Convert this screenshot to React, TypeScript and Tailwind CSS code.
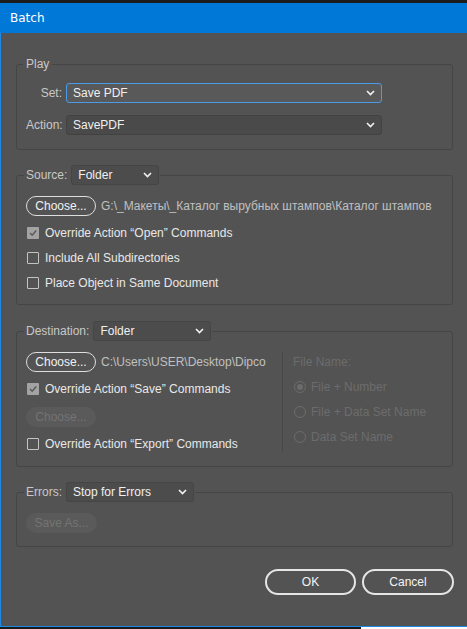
import React from 'react';

const Chevron = () => (
  <svg width="9" height="6" viewBox="0 0 9 6" className="shrink-0">
    <polyline points="1,1 4.5,4.5 8,1" fill="none" stroke="#f2f2f2" strokeWidth="1.6" />
  </svg>
);

const Select: React.FC<{ value: string; width: string; focused?: boolean; dark?: boolean }> = ({ value, width, focused, dark }) => (
  <div
    className={`${width} h-[20px] flex items-center justify-between pl-[6px] pr-[6px] rounded-[3px] border text-[12px] text-[#f0f0f0] ${
      focused ? 'border-[#4b9be6] bg-[#595959]' : dark ? 'border-[#424242] bg-[#4a4a4a]' : 'border-[#454545] bg-[#4c4c4c]'
    }`}
  >
    <span className="whitespace-nowrap">{value}</span>
    <Chevron />
  </div>
);

const Checkbox: React.FC<{ checked?: boolean; label: string }> = ({ checked, label }) => (
  <div className="h-[20px] flex items-center gap-[6px] pl-[1px]">
    {checked ? (
      <span className="w-[12px] h-[12px] bg-[#a3a3a3] rounded-[1px] flex items-center justify-center">
        <svg width="10" height="10" viewBox="0 0 10 10">
          <polyline points="2,5 4.2,7.2 8.2,2.6" fill="none" stroke="#5b5b5b" strokeWidth="1.6" />
        </svg>
      </span>
    ) : (
      <span className="w-[12px] h-[12px] border border-[#c4c4c4] rounded-[1px]" />
    )}
    <span className="text-[#e8e8e8] whitespace-nowrap">{label}</span>
  </div>
);

const Radio: React.FC<{ checked?: boolean; label: string }> = ({ checked, label }) => (
  <div className="h-[20px] flex items-center gap-[5px] pl-[1px]">
    <span className="w-[12px] h-[12px] rounded-full border border-[#6c6c6c] flex items-center justify-center">
      {checked && <span className="w-[6px] h-[6px] rounded-full bg-[#6c6c6c]" />}
    </span>
    <span className="text-[#6c6c6c] whitespace-nowrap">{label}</span>
  </div>
);

const ChooseButton = () => (
  <button className="w-[70px] h-[20px] rounded-full border border-[#dedede] text-[12px] text-[#f2f2f2] flex items-center justify-center">
    Choose...
  </button>
);

const DisabledButton: React.FC<{ label: string; width: string }> = ({ label, width }) => (
  <div className={`${width} h-[20px] rounded-full bg-[#5a5a5a] text-[12px] text-[#747474] flex items-center justify-center`}>
    {label}
  </div>
);

const groupCls = 'w-[437px] ml-[15px] border border-[#454545] rounded-[3px] pl-[9px] pr-[9px]';

export default function App() {
  return (
    <div className="w-[467px] h-[629px] bg-[#1c1c1c] flex flex-col font-['Liberation_Sans',Arial,sans-serif] text-[12px] overflow-hidden">
      <div className="h-[3px] bg-[#1c1c1c]" />
      <div className="h-[30px] bg-[#0078d7] flex items-center pl-[10px] text-white text-[12px] font-['DejaVu_Sans',sans-serif]">
        Batch
      </div>

      <div className="h-[594px] bg-[#535353] border-l border-b border-[#1e88e5] flex flex-col">
        {/* Play */}
        <fieldset className={`${groupCls} mt-[24px] pt-[12px] pb-[14px]`}>
          <legend className="-ml-[3px] px-[3px] leading-[14px] text-[#c8c8c8]">Play</legend>
          <div className="flex flex-col gap-[12px]">
            <div className="flex items-center gap-[4px]">
              <span className="w-[36px] text-right text-[#c8c8c8]">Set:</span>
              <Select value="Save PDF" width="w-[316px]" focused />
            </div>
            <div className="flex items-center gap-[4px]">
              <span className="w-[36px] text-right text-[#c8c8c8]">Action:</span>
              <Select value="SavePDF" width="w-[316px]" dark />
            </div>
          </div>
        </fieldset>

        {/* Source */}
        <fieldset className={`${groupCls} mt-[15px] pt-[11px] pb-[11px]`}>
          <legend className="-ml-[2px] pl-[2px] pr-[1px]">
            <div className="flex items-center gap-[4px]">
              <span className="text-[#c8c8c8]">Source:</span>
              <Select value="Folder" width="w-[88px]" />
            </div>
          </legend>
          <div className="flex items-center gap-[5px]">
            <ChooseButton />
            <span className="text-[#c0c0c0] whitespace-nowrap">G:\_Макеты\_Каталог вырубных штампов\Каталог штампов</span>
          </div>
          <div className="mt-[7px] flex flex-col gap-[5px]">
            <Checkbox checked label="Override Action “Open” Commands" />
            <Checkbox label="Include All Subdirectories" />
            <Checkbox label="Place Object in Same Document" />
          </div>
        </fieldset>

        {/* Destination */}
        <fieldset className={`${groupCls} mt-[16px] pt-[11px] pb-[12px]`}>
          <legend className="-ml-[2px] pl-[2px] pr-[1px]">
            <div className="flex items-center gap-[4px]">
              <span className="text-[#c8c8c8]">Destination:</span>
              <Select value="Folder" width="w-[118px]" />
            </div>
          </legend>
          <div className="flex">
            <div className="w-[256px] flex flex-col">
              <div className="flex items-center gap-[5px]">
                <ChooseButton />
                <span className="text-[#c0c0c0] whitespace-nowrap">C:\Users\USER\Desktop\Dipco</span>
              </div>
              <div className="mt-[7px]">
                <Checkbox checked label="Override Action “Save” Commands" />
              </div>
              <div className="mt-[8px]">
                <DisabledButton label="Choose..." width="w-[70px]" />
              </div>
              <div className="mt-[7px]">
                <Checkbox label="Override Action “Export” Commands" />
              </div>
            </div>
            <div className="h-[100px] border-l border-[#474747] pl-[10px] flex flex-col gap-[5px]">
              <div className="h-[20px] flex items-center text-[#6c6c6c]">File Name:</div>
              <Radio checked label="File + Number" />
              <Radio label="File + Data Set Name" />
              <Radio label="Data Set Name" />
            </div>
          </div>
        </fieldset>

        {/* Errors */}
        <fieldset className={`${groupCls} mt-[15px] pt-[11px] pb-[13px]`}>
          <legend className="-ml-[2px] pl-[2px] pr-[1px]">
            <div className="flex items-center gap-[4px]">
              <span className="text-[#c8c8c8]">Errors:</span>
              <Select value="Stop for Errors" width="w-[128px]" />
            </div>
          </legend>
          <DisabledButton label="Save As..." width="w-[71px]" />
        </fieldset>

        <div className="mt-[22px] flex justify-end gap-[6px] pr-[13px]">
          <button className="w-[91px] h-[26px] rounded-full border-2 border-[#e6e6e6] text-[#f4f4f4] text-[12px]">OK</button>
          <button className="w-[92px] h-[26px] rounded-full border-2 border-[#e6e6e6] text-[#f4f4f4] text-[12px]">Cancel</button>
        </div>
      </div>

      <div className="h-[2px] flex">
        <div className="w-[361px] bg-[#1a1c1c]" />
        <div className="flex-1 bg-white" />
      </div>
    </div>
  );
}
